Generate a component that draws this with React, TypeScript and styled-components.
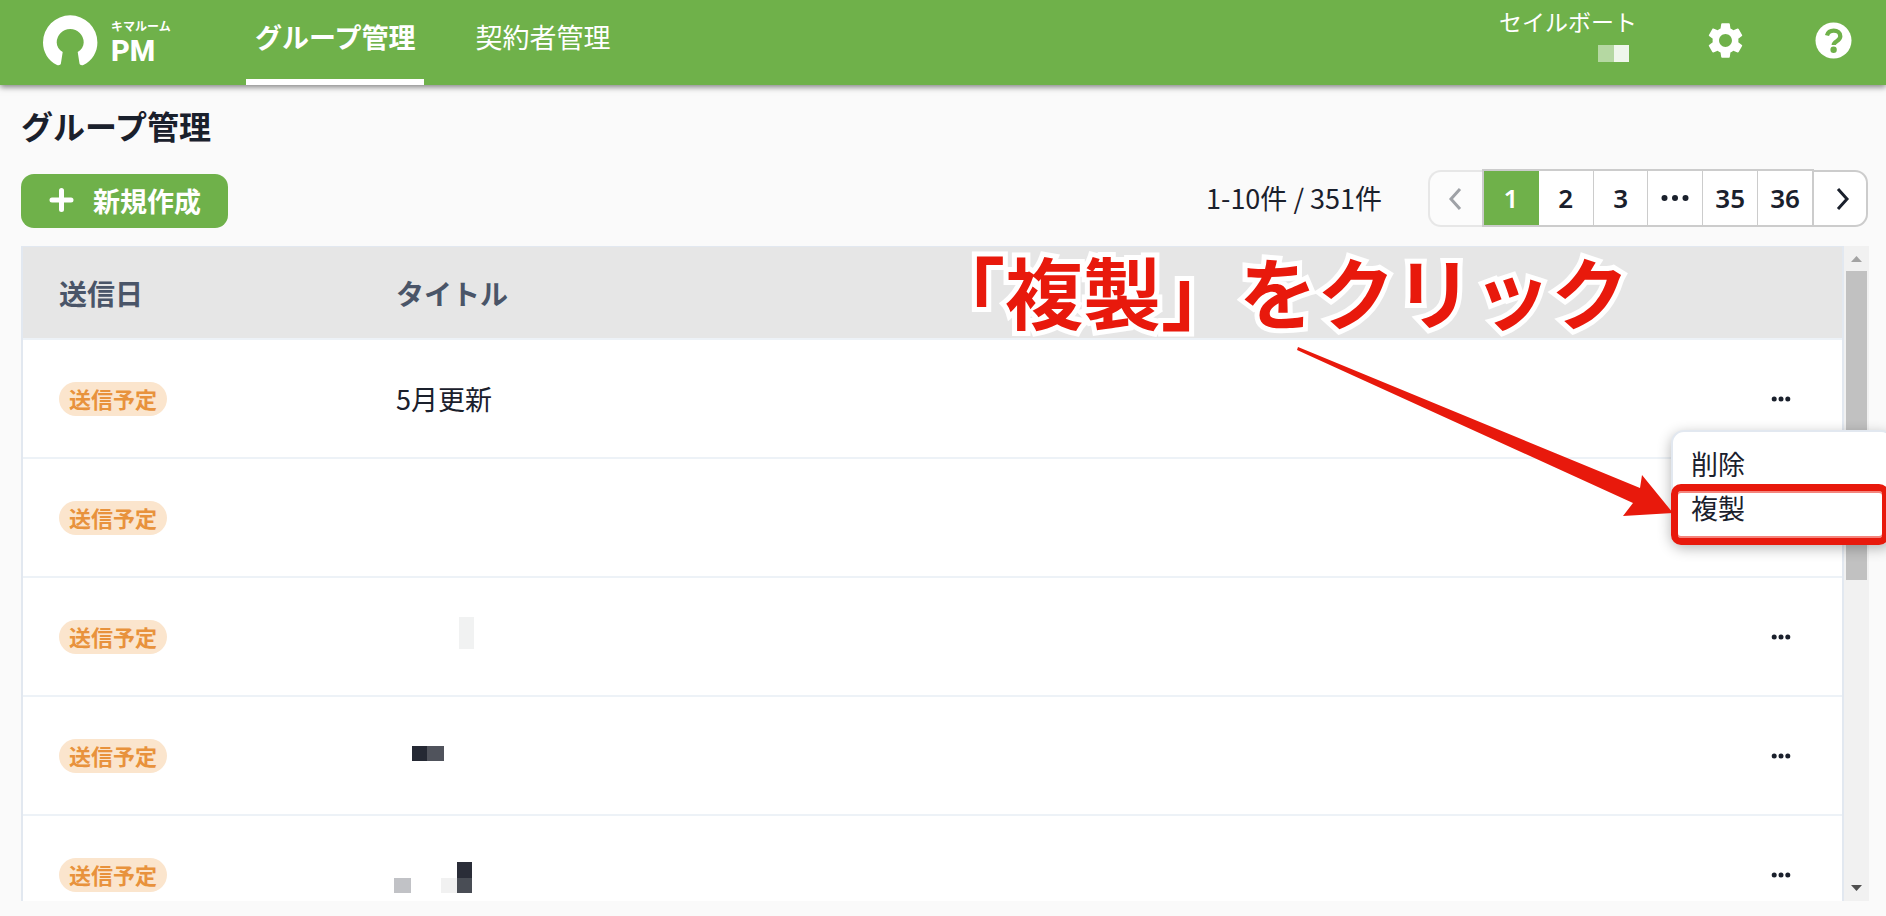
import React from 'react';
import styled, { createGlobalStyle } from 'styled-components';
import { MdSettings } from 'react-icons/md';

const GREEN = '#6fb14a';
const INK = '#1a202c';
const LINE = '#edf2f7';
const EDGE = '#e2e8f0';
const RED = '#e8190c';

const GlobalStyle = createGlobalStyle`
  *, *::before, *::after { box-sizing: border-box; }
  body { margin: 0; background: #fafafa; }
  body, button { font-family: "Noto Sans CJK JP", sans-serif; color: ${INK}; }
  button { margin: 0; padding: 0; border: 0; background: none; cursor: pointer; }
`;

const Page = styled.div`
  position: relative;
  display: flex;
  flex-direction: column;
  height: 100vh;
  overflow: hidden;
`;

const Header = styled.header`
  display: flex;
  flex: none;
  height: 85px;
  padding: 0 31px 0 43px;
  color: #fff;
  background: ${GREEN};
  box-shadow: 0 2px 6px rgba(0, 0, 0, 0.5);
`;

const Logo = styled.a`
  display: flex;
  align-items: center;
  gap: 13px;
  width: 203px;
  padding-bottom: 4px;
  color: #fff;
  text-decoration: none;
`;

const LogoText = styled.span`
  display: flex;
  flex-direction: column;
  padding-top: 4px;
`;

const LogoKana = styled.span`
  font-size: 12px;
  line-height: 16px;
  font-weight: 700;
`;

const LogoName = styled.span`
  font-family: Roboto, sans-serif;
  font-size: 29px;
  line-height: 34px;
  font-weight: 800;
`;

const Nav = styled.nav`
  display: flex;
  gap: 42px;
`;

const NavLink = styled.a<{ $active?: boolean }>`
  display: flex;
  align-items: center;
  padding: 0 9px 7px;
  border-bottom: 6px solid ${(p) => (p.$active ? '#fff' : 'transparent')};
  color: #fff;
  font-size: 27px;
  font-weight: ${(p) => (p.$active ? 700 : 400)};
  text-decoration: none;
`;

const Account = styled.div`
  display: flex;
  flex-direction: column;
  align-items: flex-end;
  gap: 10px;
  margin-left: auto;
  padding-top: 7px;
  font-size: 23px;
  line-height: 28px;
`;

const AccountMask = styled.svg`
  display: block;
  margin-right: 8px;
`;

const HeaderIcons = styled.div`
  display: flex;
  align-items: center;
  gap: 65px;
  margin-left: 67px;
  padding-bottom: 4px;
`;

const HeaderIcon = styled.button`
  display: flex;
  color: #fff;
`;

const Main = styled.main`
  display: flex;
  flex: 1;
  flex-direction: column;
  min-height: 0;
  padding: 20px 17px 15px 21px;
`;

const Title = styled.h1`
  margin: 0;
  font-size: 32px;
  line-height: 40px;
  font-weight: 700;
`;

const Toolbar = styled.div`
  display: flex;
  align-items: flex-start;
  justify-content: space-between;
  margin: 24px 0 18px;
`;

const CreateButton = styled.button`
  display: flex;
  align-items: center;
  gap: 18px;
  height: 54px;
  margin-top: 5px;
  padding: 0 27px;
  border-radius: 13px;
  color: #fff;
  background: ${GREEN};
  font-size: 27px;
  line-height: 54px;
  font-weight: 700;
`;

const Paging = styled.div`
  display: flex;
  align-items: center;
  gap: 46px;
  padding-right: 1px;
`;

const Count = styled.span`
  font-size: 27px;
  line-height: 40px;
`;

const Pager = styled.nav`
  display: flex;
  align-items: flex-end;
`;

const PageStep = styled.button<{ $side: 'left' | 'right' }>`
  display: flex;
  align-items: center;
  justify-content: center;
  width: 54px;
  height: 57px;
  border: 2px solid #ccc;
  border-${(p) => (p.$side === 'left' ? 'right' : 'left')}: 0;
  border-radius: ${(p) => (p.$side === 'left' ? '13px 0 0 13px' : '0 13px 13px 0')};
  background: #fff;

  &:disabled { opacity: 0.4; cursor: default; }
`;

const PageGroup = styled.div`
  display: flex;
  width: 332px;
  height: 58px;
  border: 2px solid #ccc;
  background: #fff;
`;

const PageItem = styled.button<{ $active?: boolean }>`
  display: flex;
  flex: 1;
  align-items: center;
  justify-content: center;
  border-right: 1px solid ${(p) => (p.$active ? GREEN : '#ccc')};
  color: ${(p) => (p.$active ? '#fff' : INK)};
  background: ${(p) => (p.$active ? GREEN : '#fff')};
  font-family: "Noto Sans", sans-serif;
  font-size: 26px;
  font-weight: 600;

  &:last-child { border-right: 0; }
`;

const Panel = styled.section`
  display: flex;
  flex: 1;
  min-height: 0;
  background: #fff;
`;

const TableViewport = styled.div`
  flex: 1;
  overflow-y: auto;
  scrollbar-width: none;
`;

const Table = styled.table`
  width: 100%;
  border: solid ${EDGE};
  border-width: 0 2px;
  border-spacing: 0;
  table-layout: fixed;
`;

const HeadCell = styled.th<{ $width?: number }>`
  width: ${(p) => (p.$width ? `${p.$width}px` : 'auto')};
  height: 94px;
  padding: 0 36px;
  border-top: 1px solid ${EDGE};
  border-bottom: 2px solid ${LINE};
  background: #e6e6e6;
  color: #4a5568;
  font-size: 28px;
  line-height: 40px;
  font-weight: 700;
  text-align: left;
`;

const Cell = styled.td`
  height: 119px;
  padding: 0 36px;
  border-bottom: 2px solid ${LINE};
  font-size: 27px;
  line-height: 40px;
`;

const Badge = styled.span`
  display: block;
  width: fit-content;
  padding: 0 10px 2px;
  border-radius: 17px;
  color: #e8923c;
  background: #fbe5cd;
  font-size: 22px;
  line-height: 32px;
  font-weight: 700;
`;

const Mask = styled.svg`
  display: block;
  overflow: visible;
`;

const RowMenuButton = styled.button`
  display: flex;
  margin: 0 auto;
`;

const Scrollbar = styled.div`
  display: flex;
  flex: none;
  flex-direction: column;
  align-items: center;
  width: 25px;
  background: #f1f1f1;
`;

const ScrollArrow = styled.svg`
  flex: none;
  width: 25px;
  height: 25px;
`;

const ScrollTrack = styled.div`
  flex: 1;
  width: 21px;
`;

const ScrollThumb = styled.div`
  height: 51%;
  background: #c1c1c1;
`;

/* The menu floats over the table, at the window's right edge. */
const Menu = styled.div`
  position: absolute;
  top: 430px;
  right: -8px;
  width: 223px;
  height: 114px;
  padding: 10px 0;
  border: 2px solid ${EDGE};
  border-radius: 13px;
  background: #fff;
  box-shadow: 0 4px 14px rgba(0, 0, 0, 0.3);
`;

const MenuItem = styled.button`
  display: block;
  width: 100%;
  padding-left: 18px;
  font-size: 27px;
  line-height: 44px;
  text-align: left;
`;

const Highlight = styled.div`
  position: absolute;
  top: 484px;
  right: -3px;
  width: 218px;
  height: 61px;
  border: 7px solid ${RED};
  border-radius: 10px;
  box-shadow: inset 0 2px #f4857d, inset 0 -2px #f4857d;
  pointer-events: none;
`;

const Callout = styled.p`
  position: absolute;
  top: 243px;
  right: 257px;
  margin: 0;
  color: ${RED};
  font-size: 78px;
  line-height: 94px;
  font-weight: 700;
  white-space: nowrap;
  -webkit-text-stroke: 10px #fff;
  paint-order: stroke fill;
  pointer-events: none;
`;

const Arrow = styled.svg`
  position: absolute;
  top: 340px;
  right: 206px;
  pointer-events: none;
`;

type Block = { x: number; y: number; w: number; h: number; fill: string };
type Row = { id: number; title?: string; blocks?: Block[] };

const rows: Row[] = [
  { id: 1, title: '5月更新' },
  { id: 2 },
  { id: 3, blocks: [{ x: 63, y: 5, w: 15, h: 32, fill: '#f1f2f2' }] },
  {
    id: 4,
    blocks: [
      { x: 16, y: 15, w: 15, h: 15, fill: '#252934' },
      { x: 31, y: 15, w: 17, h: 15, fill: '#50535c' },
    ],
  },
  {
    id: 5,
    blocks: [
      { x: -2, y: 28, w: 17, h: 15, fill: '#c1c2c6' },
      { x: 45, y: 28, w: 16, h: 15, fill: '#f1f1f1' },
      { x: 61, y: 12, w: 15, h: 16, fill: '#2a2d38' },
      { x: 61, y: 28, w: 15, h: 15, fill: '#494d55' },
    ],
  },
];

const pages = ['1', '2', '3', '…', '35', '36'];

const Dots = ({ size }: { size: 'small' | 'large' }) => {
  const [r, step] = size === 'small' ? [2.5, 6.8] : [3, 10.5];
  return (
    <svg width="32" height="20" viewBox="-16 -10 32 20" fill={INK} aria-hidden="true">
      <circle cx={-step} cy="0" r={r} />
      <circle cx="0" cy="0" r={r} />
      <circle cx={step} cy="0" r={r} />
    </svg>
  );
};

const Chevron = ({ d }: { d: string }) => (
  <svg width="24" height="24" viewBox="0 0 24 24" fill="none" stroke={INK} strokeWidth="3" aria-hidden="true">
    <path d={d} />
  </svg>
);

const HelpIcon = () => (
  <svg width="43" height="43" viewBox="0 0 43 43" aria-hidden="true">
    <circle cx="21.500" cy="21.500" r="18" fill="#fff" />
    <path d="M15 16.500c1-3.300 3.500-4.800 6.700-4.800 3.700 0 6.600 2.300 6.600 5.600 0 5-6.600 4.700-6.600 8.700" fill="none" stroke={GREEN} strokeWidth="4.300" />
    <circle cx="21.600" cy="30.700" r="3.200" fill={GREEN} />
  </svg>
);

export default function App() {
  return (
    <Page>
      <GlobalStyle />
      <Header>
        <Logo href="#">
          <svg width="55" height="51" viewBox="0 0 55 51" fill="#fff" aria-hidden="true">
            <path d="M14 50C5 45.500 0 37 0 27.500a27.200 27.200 0 0 1 54.400 0c0 9.500-5 18-14 22.500-2 .6-3.600 0-3.900-1.500L34.700 37c3.600-2.200 6-5.500 6-9.500a13.500 13.500 0 0 0-27 0c0 4 2.400 7.300 6 9.500L17.900 48.500c-.3 1.500-1.900 2.100-3.900 1.500Z" />
          </svg>
          <LogoText>
            <LogoKana>キマルーム</LogoKana>
            <LogoName>PM</LogoName>
          </LogoText>
        </Logo>
        <Nav>
          <NavLink href="#groups" $active>グループ管理</NavLink>
          <NavLink href="#contractors">契約者管理</NavLink>
        </Nav>
        <Account>
          <span>セイルボート</span>
          <AccountMask width="31" height="17" aria-hidden="true">
            <rect width="16" height="17" fill="#b5d8a2" />
            <rect x="16" width="15" height="17" fill="#eff6eb" />
          </AccountMask>
        </Account>
        <HeaderIcons>
          <HeaderIcon aria-label="設定"><MdSettings size={43} /></HeaderIcon>
          <HeaderIcon aria-label="ヘルプ"><HelpIcon /></HeaderIcon>
        </HeaderIcons>
      </Header>

      <Main>
        <Title>グループ管理</Title>
        <Toolbar>
          <CreateButton>
            <svg width="27" height="27" viewBox="0 0 27 27" stroke="#fff" strokeWidth="5" strokeLinecap="round" aria-hidden="true">
              <path d="M13.500 2.500v19M4 12h19" />
            </svg>
            新規作成
          </CreateButton>
          <Paging>
            <Count>1-10件 / 351件</Count>
            <Pager aria-label="ページ">
              <PageStep $side="left" disabled aria-label="前へ">
                <Chevron d="M16 2 7 12l9 10" />
              </PageStep>
              <PageGroup>
                {pages.map((p) => (
                  <PageItem key={p} $active={p === '1'} aria-label={p}>
                    {p === '…' ? <Dots size="large" /> : p}
                  </PageItem>
                ))}
              </PageGroup>
              <PageStep $side="right" aria-label="次へ">
                <Chevron d="m10 2 9 10-9 10" />
              </PageStep>
            </Pager>
          </Paging>
        </Toolbar>

        <Panel>
          <TableViewport>
            <Table>
              <thead>
                <tr>
                  <HeadCell $width={337}>送信日</HeadCell>
                  <HeadCell>タイトル</HeadCell>
                  <HeadCell $width={123} aria-label="操作" />
                </tr>
              </thead>
              <tbody>
                {rows.map((row) => (
                  <tr key={row.id}>
                    <Cell><Badge>送信予定</Badge></Cell>
                    <Cell>
                      {row.title}
                      {row.blocks && (
                        <Mask width="80" height="49" aria-hidden="true">
                          {row.blocks.map((b) => (
                            <rect key={`${b.x}-${b.y}`} x={b.x} y={b.y} width={b.w} height={b.h} fill={b.fill} />
                          ))}
                        </Mask>
                      )}
                    </Cell>
                    <Cell>
                      <RowMenuButton aria-label="メニュー"><Dots size="small" /></RowMenuButton>
                    </Cell>
                  </tr>
                ))}
              </tbody>
            </Table>
          </TableViewport>
          <Scrollbar>
            <ScrollArrow viewBox="0 0 25 25" fill="#a3a3a3" aria-hidden="true"><path d="M7 16h11l-5.500-6z" /></ScrollArrow>
            <ScrollTrack><ScrollThumb /></ScrollTrack>
            <ScrollArrow viewBox="0 0 25 25" fill="#505050" aria-hidden="true"><path d="M7 9h11l-5.500 6z" /></ScrollArrow>
          </Scrollbar>
        </Panel>
      </Main>

      <Menu role="menu">
        <MenuItem role="menuitem">削除</MenuItem>
        <MenuItem role="menuitem">複製</MenuItem>
      </Menu>
      <Highlight />
      <Callout>「複製」をクリック</Callout>
      <Arrow width="384" height="184" viewBox="0 0 384 184" fill={RED} aria-hidden="true">
        <path d="M2 7 344 148l2-13 31 38-50 3 10-13L1 10Z" />
      </Arrow>
    </Page>
  );
}
